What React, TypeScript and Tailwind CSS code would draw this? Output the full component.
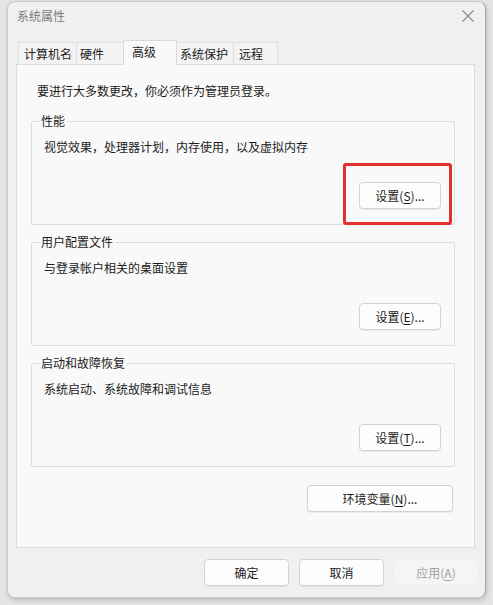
import React from 'react';

const font = "font-['Noto_Sans_CJK_SC','Noto_Sans',sans-serif]";

type Tab = { label: string; width: string; pad: string; active?: boolean };

const tabs: Tab[] = [
  { label: '计算机名', width: 'w-[58px]', pad: 'pl-[5px]' },
  { label: '硬件', width: 'w-[49px]', pad: 'pl-[3px]' },
  { label: '高级', width: 'w-[54px]', pad: 'pl-[8px]', active: true },
  { label: '系统保护', width: 'w-[58px]', pad: 'pl-[4px]' },
  { label: '远程', width: 'w-[45px]', pad: 'pl-[5px]' },
];

// label text with the access key underlined, e.g. 设置(S)...
const KeyLabel: React.FC<{ text: string; hotkey: string; tail?: string }> = ({ text, hotkey, tail = '...' }) => (
  <span>
    {text}(<span className="underline underline-offset-2">{hotkey}</span>){tail}
  </span>
);

const DlgButton: React.FC<{ className?: string; disabled?: boolean; children: React.ReactNode }> = ({
  className,
  disabled,
  children,
}) => (
  <button
    className={
      'h-[27px] flex items-center justify-center rounded-[4px] text-[12px] leading-[16px] ' +
      (disabled
        ? 'bg-[#f5f5f5] text-[#a2a2a2] border border-[#f0f0f0] '
        : 'bg-[#fdfdfd] text-[#1b1b1b] border border-[#d3d3d3] shadow-[0_1px_0_rgba(0,0,0,0.06)] ') +
      (className ?? '')
    }
  >
    {children}
  </button>
);

const Group: React.FC<{
  title: string;
  desc: string;
  hotkey: string;
  highlight?: boolean;
  className?: string;
}> = ({ title, desc, hotkey, highlight, className }) => (
  <div className={'relative h-[104px] border border-[#dcdcdc] rounded-[2px] ' + (className ?? '')}>
    <span className="absolute left-[7px] top-[-9px] px-[2px] bg-[#f9f9f9] text-[12px] leading-[16px] text-[#1b1b1b]">
      {title}
    </span>
    <div className="pt-[17px] pl-[12px] text-[12px] leading-[16px] text-[#1b1b1b]">{desc}</div>
    <div className="flex justify-end mt-[27px] pr-[13px]">
      <DlgButton className="w-[82px]">
        <KeyLabel text="设置" hotkey={hotkey} />
      </DlgButton>
    </div>
    {highlight && (
      <div className="absolute left-[311px] top-[41px] w-[109px] h-[62px] border-[3px] border-[#e2302d] rounded-[3px]" />
    )}
  </div>
);

export default function App() {
  return (
    <div className={'w-[493px] h-[605px] bg-[#e4e4e4] pl-[7px] pt-[1px] overflow-hidden ' + font}>
      <div className="w-[479px] h-[597px] bg-[#f0f0f0] border border-[#cacaca] border-r-[#a9a9a9] rounded-[8px] shadow-[1px_2px_4px_rgba(0,0,0,0.18)] flex flex-col">
        {/* title bar */}
        <div className="h-[28px] flex items-center justify-between pl-[9px] pr-[9px]">
          <span className="text-[12px] leading-[16px] text-[#7c7c7c]">系统属性</span>
          <svg width="14" height="14" viewBox="0 0 14 14" className="mr-[1px]">
            <path d="M1.5 1.5 L12.5 12.5 M12.5 1.5 L1.5 12.5" stroke="#8a8a8a" strokeWidth="1.1" fill="none" />
          </svg>
        </div>

        {/* tabs */}
        <div className="mt-[10px] pl-[10px] flex items-end h-[24px]">
          {tabs.map((t) =>
            t.active ? (
              <div
                key={t.label}
                className={`relative z-10 ${t.width} ${t.pad} -mx-[2px] h-[25px] -mb-px bg-[#f9f9f9] border border-b-0 border-[#d9d9d9] text-[12px] leading-[16px] pt-[3px] text-[#1b1b1b]`}
              >
                {t.label}
              </div>
            ) : (
              <div
                key={t.label}
                className={`${t.width} ${t.pad} h-[22px] bg-[#f3f3f3] border border-b-0 border-r-0 last:border-r border-[#dedede] text-[12px] leading-[16px] pt-[3px] text-[#1b1b1b]`}
              >
                {t.label}
              </div>
            )
          )}
        </div>

        {/* tab page */}
        <div className="ml-[8px] w-[459px] h-[484px] bg-[#f9f9f9] border border-[#dcdcdc]">
          <div className="pt-[18px] pl-[20px] text-[12px] leading-[16px] text-[#1b1b1b]">
            要进行大多数更改，你必须作为管理员登录。
          </div>
          <div className="ml-[14px] w-[424px] flex flex-col">
            <Group
              className="mt-[22px]"
              title="性能"
              desc="视觉效果，处理器计划，内存使用，以及虚拟内存"
              hotkey="S"
              highlight
            />
            <Group className="mt-[17px]" title="用户配置文件" desc="与登录帐户相关的桌面设置" hotkey="E" />
            <Group className="mt-[17px]" title="启动和故障恢复" desc="系统启动、系统故障和调试信息" hotkey="T" />
            <div className="mt-[18px] flex justify-end pr-[2px]">
              <DlgButton className="w-[146px]">
                <KeyLabel text="环境变量" hotkey="N" />
              </DlgButton>
            </div>
          </div>
        </div>

        {/* dialog buttons */}
        <div className="mt-[11px] pr-[7px] flex justify-end gap-[10px]">
          <DlgButton className="w-[85px]">确定</DlgButton>
          <DlgButton className="w-[85px]">取消</DlgButton>
          <DlgButton className="w-[84px]" disabled>
            <KeyLabel text="应用" hotkey="A" tail="" />
          </DlgButton>
        </div>
      </div>
    </div>
  );
}
